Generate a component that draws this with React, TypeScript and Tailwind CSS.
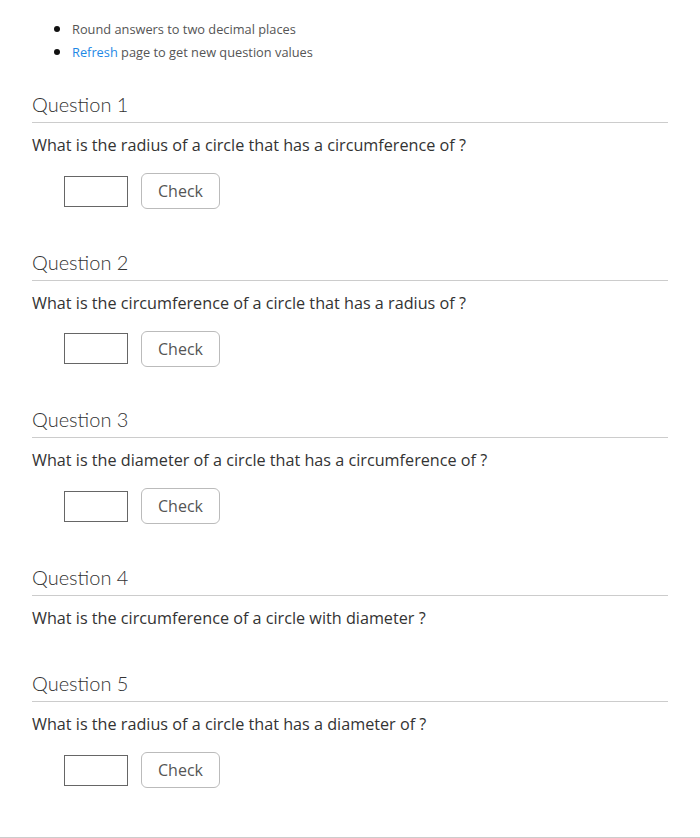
const questions = [
  { title: "Question 1", text: "What is the radius of a circle that has a circumference of ?", input: true },
  { title: "Question 2", text: "What is the circumference of a circle that has a radius of ?", input: true },
  { title: "Question 3", text: "What is the diameter of a circle that has a circumference of ?", input: true },
  { title: "Question 4", text: "What is the circumference of a circle with diameter ?", input: false },
  { title: "Question 5", text: "What is the radius of a circle that has a diameter of ?", input: true },
];

function Bullet() {
  return <span className="w-[6px] h-[6px] rounded-full bg-[#111] ml-[22px] mr-[12px] shrink-0"></span>;
}

function App() {
  return (
    <div className="min-h-[838px] bg-white flex flex-col font-['Open_Sans',sans-serif]">
      <div className="w-[636px] ml-[32px] flex-grow">
        <ul className="list-none pt-[17.5px] text-[12.8px] leading-[23.3px] text-[#555]">
          <li className="flex flex-row items-center">
            <Bullet />
            <span>Round answers to two decimal places</span>
          </li>
          <li className="flex flex-row items-center">
            <Bullet />
            <span>
              <a className="text-[#1e88e5]">Refresh</a> page to get new question values
            </span>
          </li>
        </ul>

        <div className="pt-[28px]">
          {questions.map((q) => (
            <div key={q.title} className={q.input ? "pb-[40.5px]" : "pb-[41.5px]"}>
              <h2 className="font-['Lato',sans-serif] font-light text-[20px] leading-[24px] text-[#333] pb-[6px] border-b border-[#ccc]">
                {q.title}
              </h2>
              <p className="mt-[10px] text-[16.2px] leading-[24px] text-[#333]">{q.text}</p>
              {q.input && (
                <div className="flex flex-row items-center gap-x-[13px] mt-[16px] ml-[32px]">
                  <input
                    type="text"
                    className="w-[64px] h-[31px] border border-[#666] bg-white outline-none"
                  />
                  <button className="w-[79px] h-[36px] rounded-[6px] border border-[#bbb] bg-white text-[16px] text-[#555]">
                    Check
                  </button>
                </div>
              )}
            </div>
          ))}
        </div>
      </div>
      <div className="h-[1px] bg-[#ccc] mt-auto"></div>
    </div>
  );
}

export default App;
